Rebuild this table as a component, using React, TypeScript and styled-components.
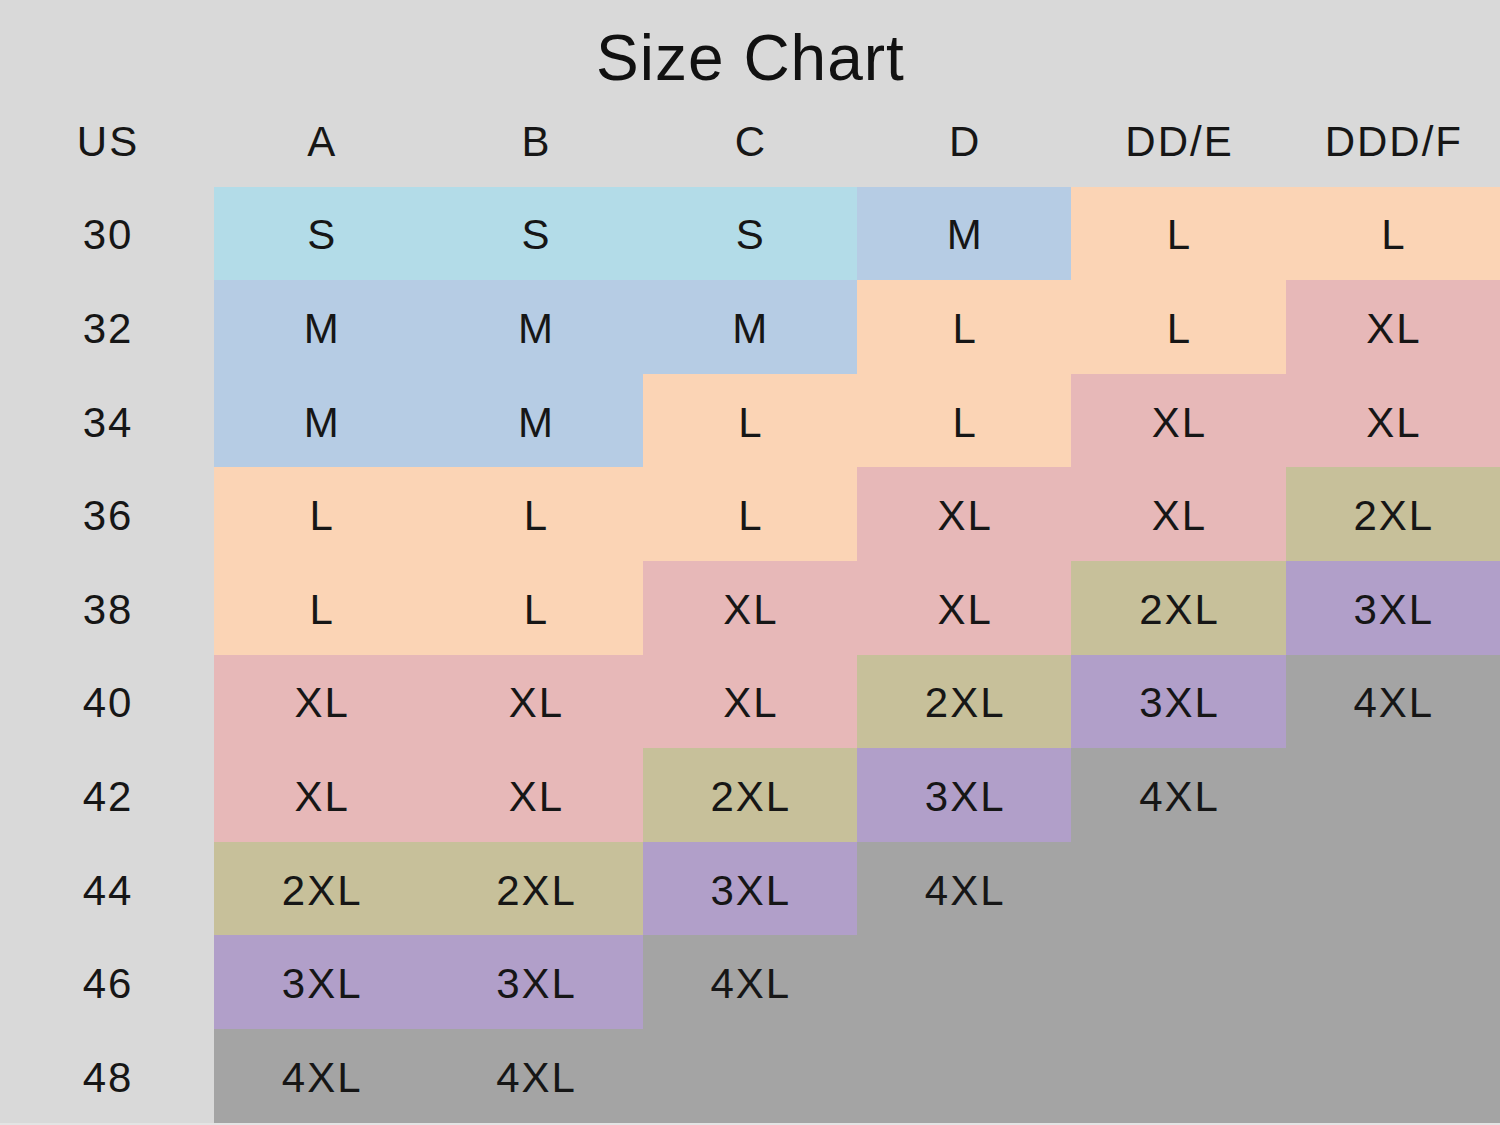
import React from "react";
import styled, { createGlobalStyle } from "styled-components";

const Global = createGlobalStyle`
  html, body { margin: 0; padding: 0; background: #d9d9d9; }
  body { font-family: "Liberation Sans", Arial, sans-serif; color: #161616; }
`;

type Size = "S" | "M" | "L" | "XL" | "2XL" | "3XL" | "4XL" | "";

const colors: Record<string, string> = {
  S: "#b3dce8",
  M: "#b6cce4",
  L: "#fbd4b5",
  XL: "#e7b8b8",
  "2XL": "#c7c09a",
  "3XL": "#b19fc9",
  "4XL": "#a4a4a4",
  "": "#a4a4a4",
};

const cups = ["A", "B", "C", "D", "DD/E", "DDD/F"];

const rows: { band: string; sizes: Size[] }[] = [
  { band: "30", sizes: ["S", "S", "S", "M", "L", "L"] },
  { band: "32", sizes: ["M", "M", "M", "L", "L", "XL"] },
  { band: "34", sizes: ["M", "M", "L", "L", "XL", "XL"] },
  { band: "36", sizes: ["L", "L", "L", "XL", "XL", "2XL"] },
  { band: "38", sizes: ["L", "L", "XL", "XL", "2XL", "3XL"] },
  { band: "40", sizes: ["XL", "XL", "XL", "2XL", "3XL", "4XL"] },
  { band: "42", sizes: ["XL", "XL", "2XL", "3XL", "4XL", ""] },
  { band: "44", sizes: ["2XL", "2XL", "3XL", "4XL", "", ""] },
  { band: "46", sizes: ["3XL", "3XL", "4XL", "", "", ""] },
  { band: "48", sizes: ["4XL", "4XL", "", "", "", ""] },
];

const Page = styled.div`
  width: 1500px;
  height: 1125px;
  background: #d9d9d9;
  display: flex;
  flex-direction: column;
  overflow: hidden;
`;

const Title = styled.h1`
  margin: 0;
  height: 93px;
  display: flex;
  align-items: center;
  justify-content: center;
  padding-top: 22px;
  padding-left: 1px;
  box-sizing: border-box;
  font-size: 64px;
  font-weight: 400;
  letter-spacing: 1px;
  color: #111;
`;

const Grid = styled.div`
  display: grid;
  grid-template-columns: 214px repeat(6, 1fr);
  grid-auto-rows: 93.6px;
  border-bottom: 2px solid #e4e4e4;
`;

const cellText = `
  display: flex;
  align-items: center;
  justify-content: center;
  font-size: 42px;
  letter-spacing: 2px;
  padding-top: 4px;
  padding-left: 2px;
  box-sizing: border-box;
`;

const HeadCell = styled.div`
  ${cellText}
`;

const BandCell = styled.div`
  ${cellText}
`;

const SizeCell = styled.div<{ $bg: string }>`
  ${cellText}
  background: ${(p) => p.$bg};
`;

export default function App() {
  return (
    <Page>
      <Global />
      <Title>Size Chart</Title>
      <Grid>
        <HeadCell>US</HeadCell>
        {cups.map((c) => (
          <HeadCell key={c}>{c}</HeadCell>
        ))}
        {rows.map((r) => (
          <React.Fragment key={r.band}>
            <BandCell>{r.band}</BandCell>
            {r.sizes.map((s, i) => (
              <SizeCell key={i} $bg={colors[s]}>
                {s}
              </SizeCell>
            ))}
          </React.Fragment>
        ))}
      </Grid>
    </Page>
  );
}
